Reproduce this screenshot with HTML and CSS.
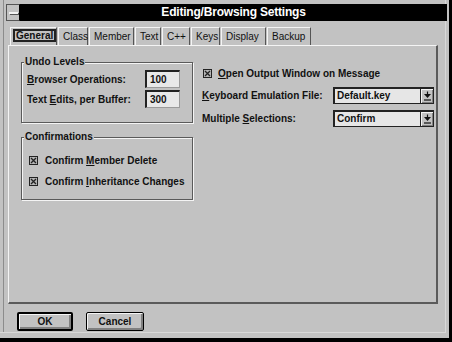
FILE: index.html
```html
<!DOCTYPE html>
<html lang="en">
<head>
    <meta charset="UTF-8">
    <title>Editing/Browsing Settings</title>
    <link rel="stylesheet" href="styles.css">
</head>
<body>
    <div class="window">
        <div class="titlebar">
            <div class="sysmenu"><span class="sysbar"></span></div>
            <div class="caption">Editing/Browsing Settings</div>
        </div>

        <div class="tabs">
            <div class="tab tab-general active"><span>General</span></div>
            <div class="tab tab-class">Class</div>
            <div class="tab tab-member">Member</div>
            <div class="tab tab-text">Text</div>
            <div class="tab tab-cpp">C++</div>
            <div class="tab tab-keys">Keys</div>
            <div class="tab tab-display">Display</div>
            <div class="tab tab-backup">Backup</div>
        </div>

        <div class="panel">
            <div class="col-left">
                <div class="group undo">
                    <span class="group-label">Undo Levels</span>
                    <div class="field-row">
                        <label><u>B</u>rowser Operations:</label>
                        <span class="edit">100</span>
                    </div>
                    <div class="field-row">
                        <label>Text <u>E</u>dits, per Buffer:</label>
                        <span class="edit">300</span>
                    </div>
                </div>
                <div class="group confirm">
                    <span class="group-label">Confirmations</span>
                    <div class="check-row">
                        <svg class="check" viewBox="0 0 9 9"><rect x="0.5" y="0.5" width="8" height="8" fill="#b4b4b4" stroke="#222"/><path d="M2 2 L7 7 M7 2 L2 7" stroke="#222" stroke-width="1.3"/></svg>
                        <span>Confirm <u>M</u>ember Delete</span>
                    </div>
                    <div class="check-row">
                        <svg class="check" viewBox="0 0 9 9"><rect x="0.5" y="0.5" width="8" height="8" fill="#b4b4b4" stroke="#222"/><path d="M2 2 L7 7 M7 2 L2 7" stroke="#222" stroke-width="1.3"/></svg>
                        <span>Confirm <u>I</u>nheritance Changes</span>
                    </div>
                </div>
            </div>

            <div class="col-right">
                <div class="check-row">
                    <svg class="check" viewBox="0 0 9 9"><rect x="0.5" y="0.5" width="8" height="8" fill="#b4b4b4" stroke="#222"/><path d="M2 2 L7 7 M7 2 L2 7" stroke="#222" stroke-width="1.3"/></svg>
                    <span><u>O</u>pen Output Window on Message</span>
                </div>
                <div class="combo-row">
                    <label><u>K</u>eyboard Emulation File:</label>
                    <div class="combo">
                        <span class="combo-text">Default.key</span>
                        <span class="combo-btn"><svg viewBox="0 0 7 10" width="7" height="10"><path d="M3.5 0.5 V3" stroke="#111" stroke-width="1.2"/><polygon points="0,3 7,3 3.5,7" fill="#111"/><path d="M0 9 H7" stroke="#111" stroke-width="1.2"/></svg></span>
                    </div>
                </div>
                <div class="combo-row">
                    <label>Multiple <u>S</u>elections:</label>
                    <div class="combo">
                        <span class="combo-text">Confirm</span>
                        <span class="combo-btn"><svg viewBox="0 0 7 10" width="7" height="10"><path d="M3.5 0.5 V3" stroke="#111" stroke-width="1.2"/><polygon points="0,3 7,3 3.5,7" fill="#111"/><path d="M0 9 H7" stroke="#111" stroke-width="1.2"/></svg></span>
                    </div>
                </div>
            </div>
        </div>

        <div class="buttons">
            <button class="btn btn-ok default">OK</button>
            <button class="btn btn-cancel">Cancel</button>
        </div>
    </div>
</body>
</html>
```

FILE: styles.css
```css
body {
    margin: 0;
    background: #000;
    font-family: "Liberation Sans", Arial, sans-serif;
    font-size: 10px;
    color: #111;
}

.window {
    width: 449px;
    height: 338px;
    box-sizing: border-box;
    padding: 4px 2px 0 6px;
    background: #c2c2c2;
    display: flex;
    flex-direction: column;
    box-shadow: inset -3px -5px 0 #c2c2c2, inset -4px -6px 0 #d8d8d8,
                inset 3px 0 0 #c2c2c2, inset 4px 0 0 #8c8c8c;
}

/* title bar */
.titlebar {
    display: flex;
    height: 17px;
}

.sysmenu {
    width: 14px;
    background: #c2c2c2;
    border: 1px solid #555;
    border-right-color: #000;
    box-sizing: border-box;
    display: flex;
    align-items: center;
    justify-content: center;
}

.sysbar {
    width: 9px;
    height: 2px;
    background: #f2f2f2;
    box-shadow: 1px 1px 0 #555;
}

.caption {
    flex: 1;
    background: #000;
    color: #fff;
    font-weight: bold;
    font-size: 12px;
    letter-spacing: -0.2px;
    line-height: 17px;
    text-align: center;
}

/* tabs */
.tabs {
    display: flex;
    gap: 1px;
    height: 18px;
    margin: 6px 0 0 4px;
}

.tab {
    box-sizing: border-box;
    height: 18px;
    padding: 2px 0 0 4px;
    border-top: 1px solid #f4f4f4;
    border-left: 1px solid #f4f4f4;
    border-right: 1px solid #555;
    line-height: 13px;
    white-space: nowrap;
}

.tab.active {
    padding: 1px 0 0 2px;
    font-weight: bold;
}

.tab.active span {
    display: inline-block;
    border: 2px solid #222;
    padding: 0 1px;
    line-height: 9px;
    height: 9px;
}

.tab-general { width: 47px; }
.tab-class { width: 30px; }
.tab-member { width: 45px; }
.tab-text { width: 26px; }
.tab-cpp { width: 28px; }
.tab-keys { width: 29px; }
.tab-display { width: 45px; }
.tab-backup { width: 44px; }

/* page */
.panel {
    width: 430px;
    height: 259px;
    box-sizing: border-box;
    margin-left: 2px;
    padding: 16px 2px 0 12px;
    border-top: 1px solid #f4f4f4;
    border-left: 1px solid #f4f4f4;
    border-right: 2px solid #5a5a5a;
    border-bottom: 2px solid #5a5a5a;
    display: flex;
    gap: 9px;
    font-weight: bold;
}

.col-left {
    width: 172px;
    display: flex;
    flex-direction: column;
    gap: 14px;
}

.group {
    position: relative;
    box-sizing: border-box;
    border: 1px solid #5a5a5a;
    box-shadow: inset 1px 1px 0 #f4f4f4, 1px 1px 0 #f4f4f4;
}

.group-label {
    position: absolute;
    top: -7px;
    left: 2px;
    padding: 0 1px;
    background: #c2c2c2;
    line-height: 12px;
}

.undo {
    height: 61px;
    padding: 7px 12px 0 5px;
    display: flex;
    flex-direction: column;
    gap: 2px;
}

.field-row {
    display: flex;
    align-items: center;
    height: 18px;
}

.edit {
    margin-left: auto;
    width: 35px;
    height: 18px;
    box-sizing: border-box;
    padding-left: 3px;
    background: #e8e8e8;
    border-top: 2px solid #222;
    border-left: 2px solid #222;
    border-right: 1px solid #9a9a9a;
    border-bottom: 1px solid #9a9a9a;
    line-height: 15px;
}

.confirm {
    height: 63px;
    padding: 15px 0 0 7px;
    display: flex;
    flex-direction: column;
    gap: 7px;
}

.check-row {
    display: flex;
    align-items: center;
    gap: 7px;
    height: 14px;
    white-space: nowrap;
}

.check {
    width: 9px;
    height: 9px;
    flex: none;
}

.col-right {
    flex: 1;
    display: flex;
    flex-direction: column;
    padding-top: 4px;
}

.col-right .check-row {
    margin-left: 1px;
    gap: 6px;
}

.combo-row {
    display: flex;
    align-items: center;
    margin-top: 7px;
}

.combo-row + .combo-row {
    margin-top: 6px;
}

.combo {
    margin-left: auto;
    width: 101px;
    height: 17px;
    box-sizing: border-box;
    display: flex;
    background: #e6e6e6;
    border: 1px solid #222;
    border-top-width: 2px;
    border-left-width: 2px;
}

.combo-text {
    padding-left: 2px;
    line-height: 14px;
}

.combo-btn {
    margin-left: auto;
    width: 12px;
    display: flex;
    align-items: center;
    justify-content: center;
    background: #c2c2c2;
    border-left: 1px solid #222;
    box-shadow: inset 1px 1px 0 #f4f4f4, inset -1px -1px 0 #808080;
}

/* bottom buttons */
.buttons {
    display: flex;
    gap: 13px;
    margin-top: 8px;
    padding-left: 11px;
}

.btn {
    height: 19px;
    box-sizing: border-box;
    padding: 0;
    background: #c2c2c2;
    border: 1px solid #000;
    border-radius: 2px;
    box-shadow: inset 1px 1px 0 #f4f4f4, inset -2px -2px 0 #808080;
    font-family: "Liberation Sans", Arial, sans-serif;
    font-size: 10px;
    font-weight: bold;
    color: #111;
}

.btn.default {
    border-width: 2px;
}

.btn-ok { width: 56px; }
.btn-cancel { width: 58px; }
```
